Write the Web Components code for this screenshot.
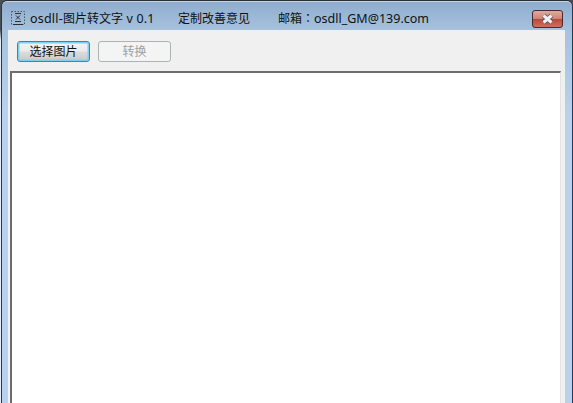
<!DOCTYPE html>
<html>
<head>
<meta charset="utf-8">
<style>
html, body { margin: 0; height: 100%; overflow: hidden; background: #b9d1ea; }
.lat { font-family: "Noto Sans", sans-serif; font-size: 12.5px; letter-spacing: 0.2px; }
.mail { letter-spacing: 0; }
.colon { font-family: "Noto Sans CJK TC", sans-serif; }
</style>
</head>
<body>
<app-window>
  <span slot="title"><span class="lat">osdll-</span>图片转文字<span class="lat"> v 0.1</span></span>
  <span slot="title">定制改善意见</span>
  <span slot="title">邮箱<span class="colon">：</span><span class="lat mail">osdll_GM@139.com</span></span>
  <win-button primary>选择图片</win-button>
  <win-button disabled>转换</win-button>
</app-window>

<template id="app-window-tpl">
<style>
:host {
  display: block;
  box-sizing: border-box;
  width: 573px;
  height: 403px;
  overflow: hidden;
  padding-left: 1px;
  background: linear-gradient(to bottom, #4a4f55 0, #4a4f55 30px, #e4edf6 40px);
  font-family: "Noto Sans CJK SC", "Liberation Sans", sans-serif;
  font-size: 12px;
  color: #111;
}
.frame {
  box-sizing: border-box;
  height: 100%;
  padding: 0 7px 0 6px;
  border: 1px solid #1f3a52;
  border-top-color: #2a2f35;
  border-bottom: 0;
  border-radius: 6px 6px 0 0;
  box-shadow: inset 0 1px 0 #c3d3e4;
  background: linear-gradient(to bottom, #8eacce 0, #a6c2de 29px, #b9d1ea 110px);
  display: flex;
  flex-direction: column;
}
.titlebar {
  flex: none;
  height: 29px;
  padding-top: 5px;
  box-sizing: border-box;
  display: flex;
  align-items: center;
  position: relative;
}
.app-icon { flex: none; width: 16px; height: 16px; margin-left: 2px; }
.titles { display: flex; margin-left: 4px; line-height: 16px; white-space: pre; }
::slotted(span:nth-of-type(1)) { width: 148px; }
::slotted(span:nth-of-type(2)) { width: 100px; }
.close {
  position: absolute;
  right: 2px;
  top: 9px;
}
.client {
  flex: 1;
  background: #f0f0f0;
  display: flex;
  flex-direction: column;
  min-height: 0;
}
.toolbar {
  flex: none;
  height: 41px;
  padding: 11px 0 0 9px;
  box-sizing: border-box;
  display: flex;
  gap: 8px;
}
.text-area {
  flex: 1;
  margin: 0 4px 0 2px;
  background: #fff;
  border-top: 2px solid #6d6d6d;
  border-left: 2px solid #6d6d6d;
  border-right: 1px solid #e3e3e3;
}
</style>
<div class="frame">
  <div class="titlebar">
    <svg class="app-icon" viewBox="0 0 16 16">
      <rect x="1.5" y="1.5" width="13" height="13" fill="none" stroke="#4a5560" stroke-dasharray="1.5 1.5"/>
      <path d="M5 3.5h6M6 5.5l4 4M10 5.5l-4 4M5 11.5h6M3 14.5h10" stroke="#2b2f33" fill="none"/>
    </svg>
    <div class="titles"><slot name="title"></slot></div>
    <svg class="close" width="31" height="18" viewBox="0 0 31 18">
      <defs>
        <linearGradient id="cl" x1="0" y1="0" x2="0" y2="1">
          <stop offset="0" stop-color="#e3aba1"/>
          <stop offset="0.48" stop-color="#d08477"/>
          <stop offset="0.52" stop-color="#b94a3a"/>
          <stop offset="1" stop-color="#cf7164"/>
        </linearGradient>
      </defs>
      <rect x="0.5" y="0.5" width="30" height="17" rx="2.5" fill="url(#cl)" stroke="#4a2a2e"/>
      <path d="M11.5 5.5l8 7M19.5 5.5l-8 7" stroke="#5d4a50" stroke-width="4.6" fill="none"/>
      <path d="M11.5 5.5l8 7M19.5 5.5l-8 7" stroke="#f3f1f3" stroke-width="3" fill="none"/>
    </svg>
  </div>
  <div class="client">
    <div class="toolbar"><slot></slot></div>
    <div class="text-area"></div>
  </div>
</div>
</template>

<template id="win-button-tpl">
<style>
:host {
  display: flex;
  align-items: center;
  justify-content: center;
  box-sizing: border-box;
  width: 73px;
  height: 21px;
  padding-bottom: 1px;
  border: 1px solid #707070;
  border-radius: 3px;
  font-size: 12px;
  line-height: 18px;
  background: linear-gradient(to bottom, #f3f3f3 0, #ebebeb 48%, #dcdcdc 52%, #c9c9c9 100%);
}
:host([primary]) {
  border-color: #3c86ad;
  box-shadow: inset 0 0 0 1.5px #7fd0ec;
}
:host([disabled]) {
  background: #f4f4f4;
  border-color: #adb2b5;
  color: #a0a0a0;
}
</style>
<slot></slot>
</template>

<script>
class AppWindow extends HTMLElement {
  constructor() {
    super();
    const shadowRoot = this.attachShadow({ mode: "open" });
    const $tpl = document.getElementById("app-window-tpl");
    shadowRoot.appendChild($tpl.content.cloneNode(true));
  }
}

class WinButton extends HTMLElement {
  constructor() {
    super();
    const shadowRoot = this.attachShadow({ mode: "open" });
    const $tpl = document.getElementById("win-button-tpl");
    shadowRoot.appendChild($tpl.content.cloneNode(true));
  }
}

customElements.define("app-window", AppWindow);
customElements.define("win-button", WinButton);
</script>
</body>
</html>
